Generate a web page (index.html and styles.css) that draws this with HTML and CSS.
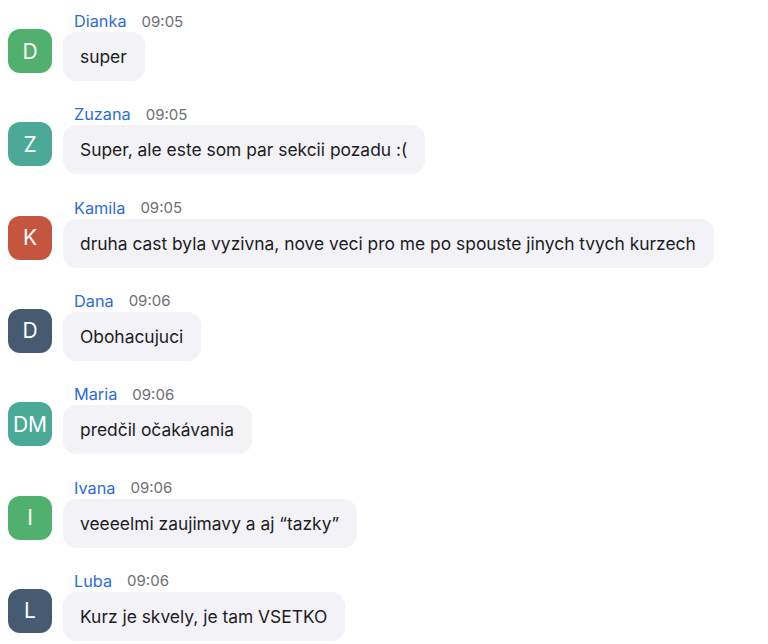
FILE: index.html
```html
<!DOCTYPE html>
<html lang="en">
<head>
    <title>Chat</title>
    <link rel="stylesheet" href="styles.css">
</head>
<body>
    <div class="chat">
        <div class="msg">
            <div class="avatar green">D</div>
            <div class="body">
                <div class="meta"><span class="name">Dianka</span><span class="time">09:05</span></div>
                <div class="bubble">super</div>
            </div>
        </div>
        <div class="msg">
            <div class="avatar teal">Z</div>
            <div class="body">
                <div class="meta"><span class="name">Zuzana</span><span class="time">09:05</span></div>
                <div class="bubble">Super, ale este som par sekcii pozadu :(</div>
            </div>
        </div>
        <div class="msg">
            <div class="avatar red">K</div>
            <div class="body">
                <div class="meta"><span class="name">Kamila</span><span class="time">09:05</span></div>
                <div class="bubble">druha cast byla vyzivna, nove veci pro me po spouste jinych tvych kurzech</div>
            </div>
        </div>
        <div class="msg">
            <div class="avatar slate">D</div>
            <div class="body">
                <div class="meta"><span class="name">Dana</span><span class="time">09:06</span></div>
                <div class="bubble">Obohacujuci</div>
            </div>
        </div>
        <div class="msg">
            <div class="avatar teal">DM</div>
            <div class="body">
                <div class="meta"><span class="name">Maria</span><span class="time">09:06</span></div>
                <div class="bubble">predčil očakávania</div>
            </div>
        </div>
        <div class="msg">
            <div class="avatar green">I</div>
            <div class="body">
                <div class="meta"><span class="name">Ivana</span><span class="time">09:06</span></div>
                <div class="bubble">veeeelmi zaujimavy a aj “tazky”</div>
            </div>
        </div>
        <div class="msg">
            <div class="avatar slate">L</div>
            <div class="body">
                <div class="meta"><span class="name">Luba</span><span class="time">09:06</span></div>
                <div class="bubble">Kurz je skvely, je tam VSETKO</div>
            </div>
        </div>
    </div>
</body>
</html>
```

FILE: styles.css
```css
/* Chat list */
body {
    margin: 0;
    padding: 0;
    background-color: #ffffff;
    font-family: Inter, "Noto Sans", sans-serif;
    color: #1d1d1f;
}

.chat {
    display: flex;
    flex-direction: column;
    gap: 22.33px;
    padding: 10px 0 0 8px;
}

.msg {
    display: flex;
    align-items: flex-start;
    gap: 11px;
}

.avatar {
    width: 44px;
    height: 44px;
    margin-top: 19px;
    border-radius: 12px;
    display: flex;
    align-items: center;
    justify-content: center;
    color: #ffffff;
    font-size: 21px;
    flex-shrink: 0;
}

.green { background-color: #52b06e; }
.teal  { background-color: #4aaa97; }
.red   { background-color: #c5553e; }
.slate { background-color: #465a72; }

.meta {
    height: 22px;
    display: flex;
    align-items: center;
    gap: 15px;
    padding-left: 11px;
}

.name {
    color: #2e6bd6;
    font-size: 16.3px;
}

.time {
    color: #6e6e76;
    font-size: 15px;
}

.bubble {
    display: inline-block;
    background-color: #f2f2f7;
    border-radius: 14px;
    padding: 0 18px 0 17px;
    line-height: 49px;
    font-size: 17.4px;
}
```
